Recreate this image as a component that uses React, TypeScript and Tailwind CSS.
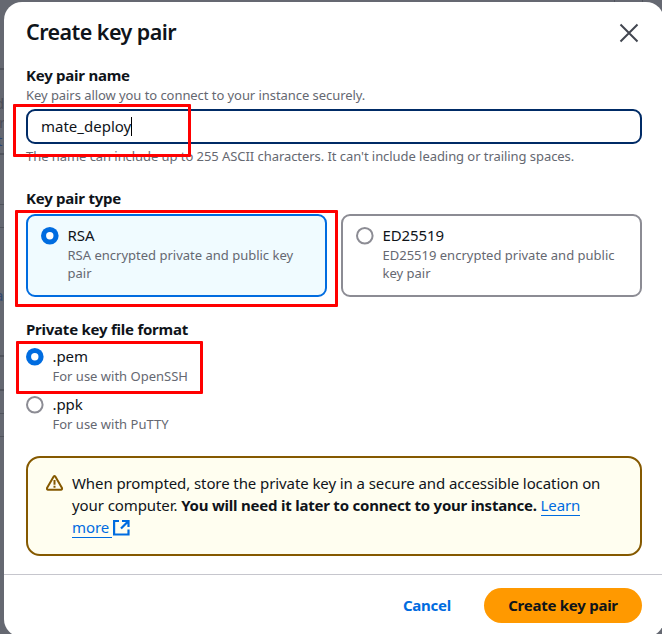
import React from "react";

function Radio({ on }: { on?: boolean }) {
  return (
    <svg width="18" height="18" viewBox="0 0 18 18" className="mt-px block shrink-0">
      {on ? (
        <>
          <circle cx="8.8" cy="8.8" r="8.8" fill="#006ce0" />
          <circle cx="8.8" cy="8.8" r="3.7" fill="#fff" />
        </>
      ) : (
        <circle cx="8.8" cy="8.8" r="7.8" fill="#fff" stroke="#8c8c94" strokeWidth="2" />
      )}
    </svg>
  );
}

const hintBase = "text-[13px] leading-[18px] text-[#656871] whitespace-nowrap";
const hint = hintBase + " tracking-[-0.06px]";
const label = "text-[15px] leading-[22px] tracking-[-0.24px] font-bold whitespace-nowrap";
const body = "text-[15px] leading-[22px] tracking-[-0.09px] whitespace-nowrap";

export default function App() {
  return (
    <div className="relative h-[634px] w-[662px] overflow-hidden bg-[#656871] font-['Noto_Sans',sans-serif] text-[#0f141a]">
      <div className="absolute left-0 top-0 h-full w-1 overflow-hidden text-[15px] leading-[17px] text-[#4a4d57]">
        <div className="absolute top-[68px] h-[2px] w-1 bg-[#50535c]" />
        <div className="absolute top-[153px] h-[2px] w-1 bg-[#50535c]" />
        <div className="absolute top-[204px] h-px w-1 bg-[#50535c]" />
        <div className="absolute top-[227px] h-px w-1 bg-[#50535c]" />
        <div className="absolute top-[355px] h-[2px] w-1 bg-[#50535c]" />
        <div className="absolute top-[389px] h-[2px] w-1 bg-[#50535c]" />
        <div className="absolute top-[413px] h-px w-1 bg-[#50535c]" />
        <div className="absolute top-[436px] h-px w-1 bg-[#50535c]" />
        <span className="absolute -left-[5px] top-[95px]">d</span>
        <span className="absolute -left-[1px] top-[114px]">r</span>
        <span className="absolute -left-[3px] top-[132px] text-[#2a4575]">t</span>
        <span className="absolute -left-[5px] top-[287px] text-[#34496f]">a</span>
      </div>
      <div className="absolute left-[614px] top-0 h-[2px] w-px bg-[#50535c]" />
      <div className="absolute left-[642px] top-0 h-[2px] w-px bg-[#50535c]" />

      <div className="absolute left-1 top-[2px] flex h-[635px] w-[660px] flex-col rounded-[18px] bg-white">
        <header className="flex h-[62px] items-center justify-between pl-[22px] pr-[25px]">
          <h1 className="-mt-[3px] text-[21.5px] leading-[28px] font-semibold tracking-[-0.55px]">Create key pair</h1>
          <svg width="20" height="20" viewBox="0 0 20 20" className="-mt-px block" stroke="#424650" strokeWidth="2" fill="none">
            <path d="M1.5 1.5 18.5 18.5M18.5 1.5 1.5 18.5" />
          </svg>
        </header>

        <main className="flex h-[510px] flex-col px-[22px]">
          <div className={label}>Key pair name</div>
          <div className={hint}>Key pairs allow you to connect to your instance securely.</div>
          <div className="mt-[5px] flex h-[35px] shrink-0 items-center rounded-[9px] border-2 border-[#002b66] pl-[13px]">
            <span className="-mt-[2px] text-[15px] leading-[22px] whitespace-nowrap">mate_deploy</span>
            <span className="h-[19px] w-px bg-black" />
          </div>
          <div className={hint + " mt-[3px]"}>The name can include up to 255 ASCII characters. It can't include leading or trailing spaces.</div>

          <div className={label + " mt-[22px]"}>Key pair type</div>
          <div className="mt-[5px] flex gap-[14px]">
            <div className="flex h-[83px] w-[301px] gap-[8.5px] rounded-[9px] border-2 border-[#006ce0] bg-[#f0fbff] pl-[13px] pt-[10px]">
              <Radio on />
              <div className="-mt-[2px]">
                <div className={body}>RSA</div>
                <div className={hintBase}>RSA encrypted private and public key<br />pair</div>
              </div>
            </div>
            <div className="flex h-[83px] w-[301px] gap-[8.5px] rounded-[9px] border-2 border-[#8c8c94] pl-[13px] pt-[10px]">
              <Radio />
              <div className="-mt-[2px]">
                <div className={body}>ED25519</div>
                <div className={hintBase}>ED25519 encrypted private and public<br />key pair</div>
              </div>
            </div>
          </div>

          <div className={label + " mt-[21px]"}>Private key file format</div>
          <div className="mt-[7px] flex gap-[8.5px]">
            <Radio on />
            <div className="-mt-[2px]">
              <div className={body}>.pem</div>
              <div className={hintBase}>For use with OpenSSH</div>
            </div>
          </div>
          <div className="mt-[10px] flex gap-[8.5px]">
            <Radio />
            <div className="-mt-[2px]">
              <div className={body}>.ppk</div>
              <div className={hintBase}>For use with PuTTY</div>
            </div>
          </div>

          <div className="mt-[23px] flex h-[100px] shrink-0 gap-[8px] rounded-[14px] border-2 border-[#855900] bg-[#fffef0] pl-[18px] pt-[14px]">
            <svg width="18" height="18" viewBox="0 0 18 18" className="mt-[2px] block" fill="none" stroke="#855900" strokeWidth="2" strokeLinejoin="round">
              <path d="M7.7 2.5Q8.5 1.4 9.3 2.5L16 14Q16.3 15.7 15 15.7H2Q.7 15.7 1 14Z" />
              <path d="M8.5 6V10.7M8.5 11.7V13.7" />
            </svg>
            <div className={body}>
              <div>When prompted, store the private key in a secure and accessible location on</div>
              <div>your computer. <b className="tracking-[-0.22px]">You will need it later to connect to your instance.</b> <span className="inline-block h-[22px] border-b border-[#006ce0] text-[#006ce0]">Learn</span></div>
              <div className="flex text-[#006ce0]">
                <span className="h-[22px] w-[40px] border-b border-[#006ce0]">more</span>
                <svg width="17" height="17" viewBox="0 0 17 17" className="ml-px mt-[3px] block" fill="none" stroke="#006ce0" strokeWidth="2.2">
                  <path d="M6 2H1.1V15.5H15.5V10.5M9 2H15.5V8M15.5 2 8 9.5" />
                </svg>
              </div>
            </div>
          </div>
        </main>

        <footer className="flex h-[63px] items-start justify-end gap-[33px] border-t border-[#c6c6cd] pr-[22px] pt-[13px]">
          <span className="text-[15px] leading-[35px] font-bold tracking-[-0.25px] text-[#006ce0]">Cancel</span>
          <span className="h-[35px] w-[158px] rounded-full bg-[#ff9900] text-center text-[15px] leading-[35px] font-bold tracking-[-0.25px]">Create key pair</span>
        </footer>
      </div>

      <div className="absolute left-[13px] top-[104px] h-[53px] w-[178px] rounded-[1px] border-[3px] border-[#ff0000]" />
      <div className="absolute left-[15px] top-[210px] h-[97px] w-[323px] rounded-[1px] border-[3px] border-[#ff0000]" />
      <div className="absolute left-[16px] top-[341px] h-[53px] w-[187px] rounded-[1px] border-[3px] border-[#ff0000]" />
    </div>
  );
}
